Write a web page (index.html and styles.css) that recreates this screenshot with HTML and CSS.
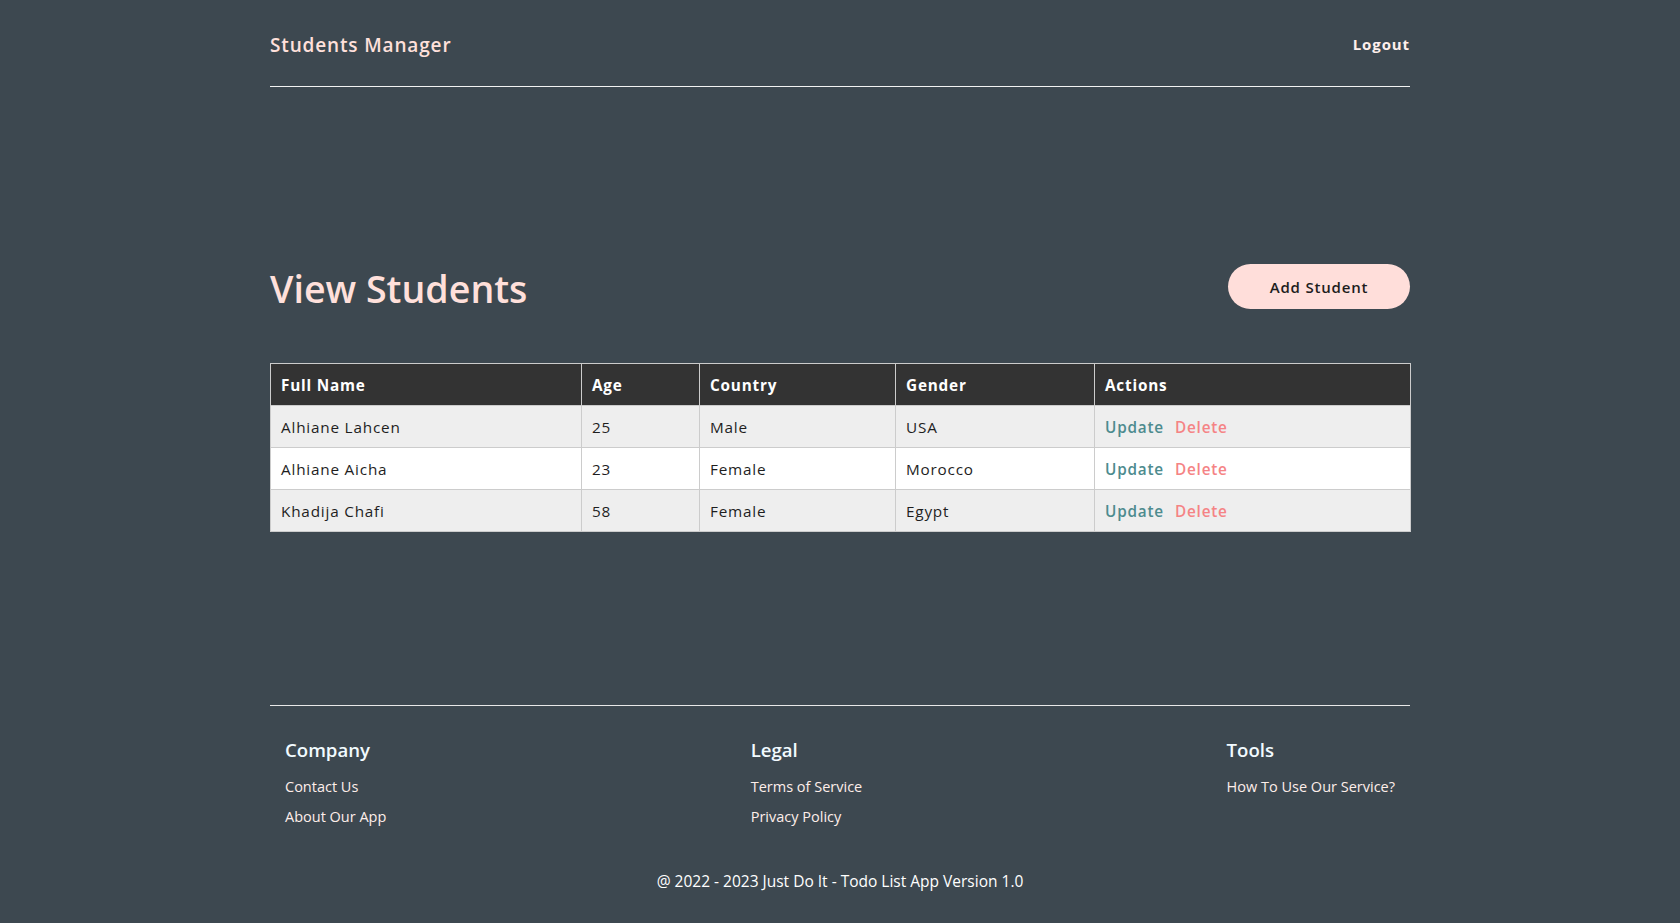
FILE: index.html
```html
<!DOCTYPE html>
<html lang="en">
<head>
<meta charset="utf-8">
<title>Students Manager</title>
<link rel="stylesheet" href="styles.css">
</head>
<body>
<div class="container">
  <header class="topbar">
    <a class="brand" href="#">Students Manager</a>
    <a class="logout" href="#">Logout</a>
  </header>

  <main class="main">
    <div class="title-row">
      <h1 class="page-title">View Students</h1>
      <button class="btn-add">Add Student</button>
    </div>

    <table class="students">
      <colgroup>
        <col class="c-name"><col class="c-age"><col class="c-country"><col class="c-gender"><col class="c-actions">
      </colgroup>
      <thead>
        <tr><th>Full Name</th><th>Age</th><th>Country</th><th>Gender</th><th>Actions</th></tr>
      </thead>
      <tbody>
        <tr><td>Alhiane Lahcen</td><td>25</td><td>Male</td><td>USA</td><td><a class="act-update" href="#">Update</a><a class="act-delete" href="#">Delete</a></td></tr>
        <tr><td>Alhiane Aicha</td><td>23</td><td>Female</td><td>Morocco</td><td><a class="act-update" href="#">Update</a><a class="act-delete" href="#">Delete</a></td></tr>
        <tr><td>Khadija Chafi</td><td>58</td><td>Female</td><td>Egypt</td><td><a class="act-update" href="#">Update</a><a class="act-delete" href="#">Delete</a></td></tr>
      </tbody>
    </table>
  </main>

  <footer class="footer">
    <div class="footer-cols">
      <div class="fcol">
        <h3>Company</h3>
        <a href="#">Contact Us</a>
        <a href="#">About Our App</a>
      </div>
      <div class="fcol">
        <h3>Legal</h3>
        <a href="#">Terms of Service</a>
        <a href="#">Privacy Policy</a>
      </div>
      <div class="fcol">
        <h3>Tools</h3>
        <a href="#">How To Use Our Service?</a>
      </div>
    </div>
    <p class="copyright">@ 2022 - 2023 Just Do It - Todo List App Version 1.0</p>
  </footer>
</div>
</body>
</html>
```

FILE: styles.css
```css
* { box-sizing: border-box; }

html, body {
  margin: 0;
  padding: 0;
  background: #3d4850;
  font-family: "Open Sans", "Noto Sans", sans-serif;
  color: #ffffff;
}

a { text-decoration: none; }

.container {
  width: 1140px;
  margin: 0 auto;
}

.topbar {
  display: flex;
  justify-content: space-between;
  align-items: center;
  padding: 30px 0 26px;
  border-bottom: 1px solid #f2f2f2;
}

.brand {
  font-size: 19px;
  font-weight: 600;
  line-height: 30px;
  letter-spacing: 0.85px;
  color: #ffe0db;
}

.logout {
  margin-top: -2px;
  font-size: 15px;
  font-weight: 700;
  line-height: 30px;
  letter-spacing: 0.9px;
  color: #ffefec;
}

.main {
  padding-top: 178px;
}

.title-row {
  display: flex;
  justify-content: space-between;
  align-items: center;
  height: 48px;
}

.page-title {
  margin: 0;
  font-size: 37.6px;
  font-weight: 600;
  line-height: 48px;
  color: #ffe0db;
}

.btn-add {
  width: 182px;
  height: 45px;
  margin-top: -5px;
  border: none;
  border-radius: 23px;
  background: #ffdeda;
  color: #1d1d1d;
  font-family: inherit;
  font-size: 15px;
  font-weight: 600;
  letter-spacing: 0.8px;
  cursor: pointer;
}

.students {
  margin-top: 50px;
  width: 100%;
  border-collapse: collapse;
  table-layout: fixed;
  border: 1px solid #cfcfcf;
}

.c-name { width: 311px; }
.c-age { width: 118px; }
.c-country { width: 196px; }
.c-gender { width: 199px; }
.c-actions { width: 316px; }

.students th,
.students td {
  height: 42px;
  padding: 0 10px;
  text-align: left;
  border: 1px solid #cccccc;
  font-size: 15.3px;
  letter-spacing: 0.8px;
}

.students th {
  background: #333333;
  color: #ffffff;
  font-weight: 700;
}

.students td {
  color: #1e1e1e;
}

.students tbody tr:nth-child(odd) td { background: #eeeeee; }
.students tbody tr:nth-child(even) td { background: #ffffff; }

.act-update {
  color: #4d8b8e;
  font-weight: 600;
  margin-right: 11px;
}

.act-delete {
  color: #f58385;
  font-weight: 600;
}

.footer {
  margin-top: 173px;
  border-top: 1px solid #e8e8e8;
  padding-top: 32px;
  padding-bottom: 33px;
}

.footer-cols {
  display: flex;
  justify-content: space-between;
  padding: 0 15px;
}

.fcol {
  display: flex;
  flex-direction: column;
}

.fcol h3 {
  margin: 0 0 15px;
  font-size: 18.6px;
  font-weight: 600;
  line-height: 24px;
  color: #f2fbff;
}

.fcol a {
  font-size: 14.5px;
  line-height: 20px;
  color: #fdeeea;
  margin-bottom: 10px;
}

.copyright {
  margin: 34px 0 0;
  text-align: center;
  font-size: 15.5px;
  line-height: 20px;
  color: #ffffff;
}
```
